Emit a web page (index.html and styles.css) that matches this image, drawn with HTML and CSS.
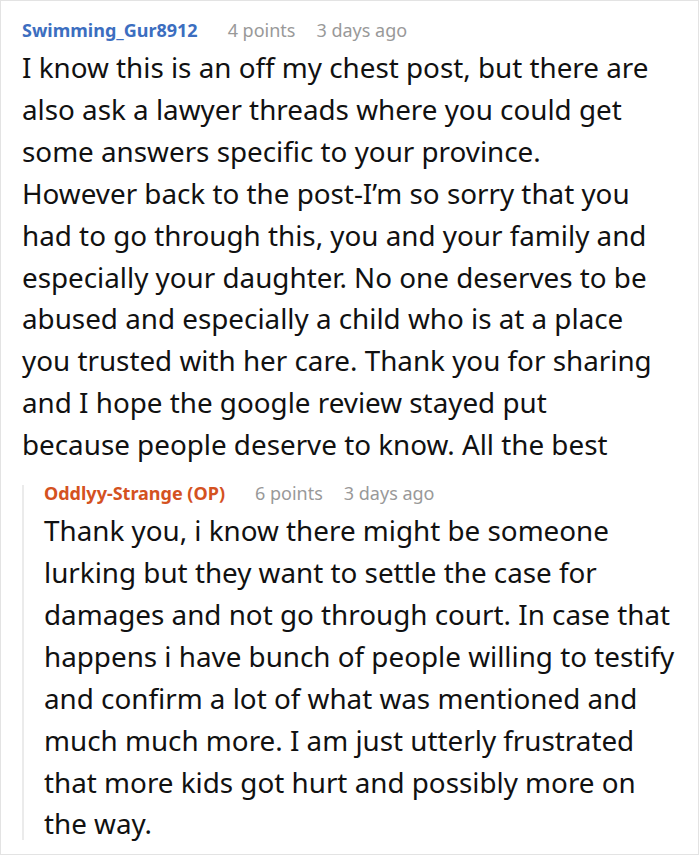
FILE: index.html
```html
<!DOCTYPE html>
<html>
<head>
<meta charset="utf-8">
<link rel="stylesheet" href="styles.css">
</head>
<body>
<div class="card">
  <div class="comment">
    <div class="meta">
      <span class="author">Swimming_Gur8912</span>
      <span class="stat">4 points</span>
      <span class="stat">3 days ago</span>
    </div>
    <p class="body">I know this is an off my chest post, but there are also ask a lawyer threads where you could get some answers specific to your province. However back to the post-I’m so sorry that you had to go through this, you and your family and especially your daughter. No one deserves to be abused and especially a child who is at a place you trusted with her care. Thank you for sharing and I hope the google review stayed put because people deserve to know. All the best</p>
    <div class="reply">
      <div class="meta">
        <span class="author op">Oddlyy-Strange (OP)</span>
        <span class="stat">6 points</span>
        <span class="stat">3 days ago</span>
      </div>
      <p class="body">Thank you, i know there might be someone lurking but they want to settle the case for damages and not go through court. In case that happens i have bunch of people willing to testify and confirm a lot of what was mentioned and much much more. I am just utterly frustrated that more kids got hurt and possibly more on the way.</p>
    </div>
  </div>
</div>
</body>
</html>
```
FILE: styles.css
```css
html, body {
  margin: 0;
  padding: 0;
  background: #fff;
}
body {
  font-family: "Noto Sans", "Open Sans", sans-serif;
  color: #111;
}
.card {
  box-sizing: border-box;
  width: 699px;
  height: 855px;
  border: 1px solid #e3e3e3;
  padding: 15px 41px 0 21px;
  overflow: hidden;
}
.meta {
  display: flex;
  font-size: 18px;
  line-height: 28px;
  align-items: baseline;
  white-space: nowrap;
  margin-bottom: 3px;
}
.author {
  font-weight: 700;
  color: #3c6ec0;
  margin-right: 30px;
}
.author.op {
  color: #d4521f;
}
.stat {
  color: #999;
  margin-right: 21px;
}
.body {
  margin: 0;
  font-size: 27.8px;
  line-height: 41.9px;
}
.reply {
  position: relative;
  margin-top: 13px;
  margin-right: -20px;
  padding-left: 22px;
}
.reply::before {
  content: "";
  position: absolute;
  left: 0;
  top: 6px;
  bottom: 5px;
  width: 2px;
  background: #ebebeb;
}
```
